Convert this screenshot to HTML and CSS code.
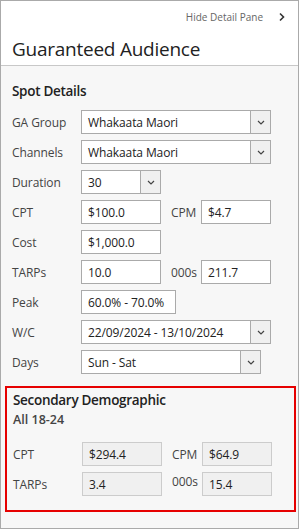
FILE: index.html
```html
<!DOCTYPE html>
<html lang="en">
<head>
  <meta charset="UTF-8" />
  <title>Guaranteed Audience</title>
  <meta name="viewport" content="width=device-width, initial-scale=1.0" />
  <link rel="stylesheet" href="styles.css">
</head>
<body>
  <div class="pane">
    <div class="pane-head">
      <div class="hide-link">
        <span>Hide Detail Pane</span>
        <svg class="hide-chev" width="6" height="10" viewBox="0 0 6 10"><path d="M1 1.5 L4.5 5 L1 8.5" fill="none" stroke="#333" stroke-width="1.6"/></svg>
      </div>
      <h1>Guaranteed Audience</h1>
    </div>

    <div class="pane-body">
      <h2>Spot Details</h2>

      <div class="row">
        <label>GA Group</label>
        <div class="select w-full"><span>Whakaata Maori</span><i class="drop"></i></div>
      </div>
      <div class="row">
        <label>Channels</label>
        <div class="select w-full"><span>Whakaata Maori</span><i class="drop"></i></div>
      </div>
      <div class="row">
        <label>Duration</label>
        <div class="select w-short"><span>30</span><i class="drop"></i></div>
      </div>
      <div class="row">
        <label>CPT</label>
        <div class="input w-short">$100.0</div>
        <label class="sub">CPM</label>
        <div class="input w-small">$4.7</div>
      </div>
      <div class="row">
        <label>Cost</label>
        <div class="input w-short">$1,000.0</div>
      </div>
      <div class="row">
        <label>TARPs</label>
        <div class="input w-short">10.0</div>
        <label class="sub">000s</label>
        <div class="input w-small">211.7</div>
      </div>
      <div class="row">
        <label>Peak</label>
        <div class="input w-peak">60.0% - 70.0%</div>
      </div>
      <div class="row">
        <label>W/C</label>
        <div class="select w-full"><span>22/09/2024 - 13/10/2024</span><i class="drop"></i></div>
      </div>
      <div class="row">
        <label>Days</label>
        <div class="select w-days"><span>Sun - Sat</span><i class="drop"></i></div>
      </div>

      <div class="secondary">
        <h2>Secondary Demographic</h2>
        <h3>All 18-24</h3>
        <div class="row">
          <label>CPT</label>
          <div class="input ro w-short">$294.4</div>
          <label class="sub">CPM</label>
          <div class="input ro w-small">$64.9</div>
        </div>
        <div class="row">
          <label>TARPs</label>
          <div class="input ro w-short">3.4</div>
          <label class="sub up">000s</label>
          <div class="input ro w-small">15.4</div>
        </div>
      </div>
    </div>
  </div>
</body>
</html>
```

FILE: styles.css
```css
body { margin: 0; background: #fff; font-family: "Open Sans", "Noto Sans", sans-serif; color: #333; }
.pane {
  width: 299px;
  height: 529px;
  box-sizing: border-box;
  border: 1px solid #aaa;
  background: #f7f7f7;
}
.pane-head {
  background: #fff;
  height: 64px;
  border-bottom: 1px solid #c8c8c8;
}
.hide-link {
  display: flex;
  justify-content: flex-end;
  align-items: center;
  gap: 16px;
  padding: 8px 13px 0 0;
  height: 16px;
  font-size: 10px;
  color: #666;
}
.hide-chev { display: block; }
h1 {
  margin: 12px 0 0 11px;
  font-size: 19px;
  font-weight: 400;
  letter-spacing: -0.25px;
  color: #222;
  line-height: 24px;
}
.pane-body { padding: 0 0 0 11px; }
h2 {
  margin: 0;
  padding: 15px 0 9px;
  font-size: 13.5px;
  font-weight: 600;
  letter-spacing: -0.3px;
  color: #222;
  line-height: 20px;
}
.row {
  display: flex;
  align-items: center;
  height: 24px;
  margin-bottom: 6px;
}
label {
  width: 69px;
  flex: none;
  font-size: 12px;
  letter-spacing: -0.1px;
  color: #444;
}
label.sub { width: 30px; padding-left: 10px; }
label.up { margin-top: -5px; }
.input, .select {
  height: 24px;
  box-sizing: border-box;
  border: 1px solid #aaa;
  background: #fff;
  font-size: 12px;
  letter-spacing: -0.1px;
  color: #222;
  display: flex;
  align-items: center;
  padding-left: 6px;
}
.select { padding-left: 0; }
.select span { flex: 1; padding-left: 6px; }
.drop {
  width: 19px;
  height: 22px;
  border-left: 1px solid #aaa;
  background: #f0f0f0 url("data:image/svg+xml,%3Csvg xmlns='http://www.w3.org/2000/svg' width='8' height='5' viewBox='0 0 8 5'%3E%3Cpath d='M1 1 L4 4 L7 1' fill='none' stroke='%23444' stroke-width='1.2'/%3E%3C/svg%3E") no-repeat center;
}
.w-full { width: 190px; }
.w-short { width: 80px; }
.w-small { width: 70px; }
.w-peak { width: 95px; }
.w-days { width: 180px; }
.input.ro { background: #f0f0f0; border-color: #ccc; }
.secondary {
  margin: 12px 0 0 -7px;
  width: 291px;
  height: 126px;
  box-sizing: border-box;
  border: 2px solid #e60000;
  padding-left: 6px;
}
.secondary h2 { padding: 2px 0 0; }
.secondary h3 {
  margin: 0 0 12px;
  font-size: 12.5px;
  font-weight: 600;
  color: #444;
  line-height: 20px;
}
```
